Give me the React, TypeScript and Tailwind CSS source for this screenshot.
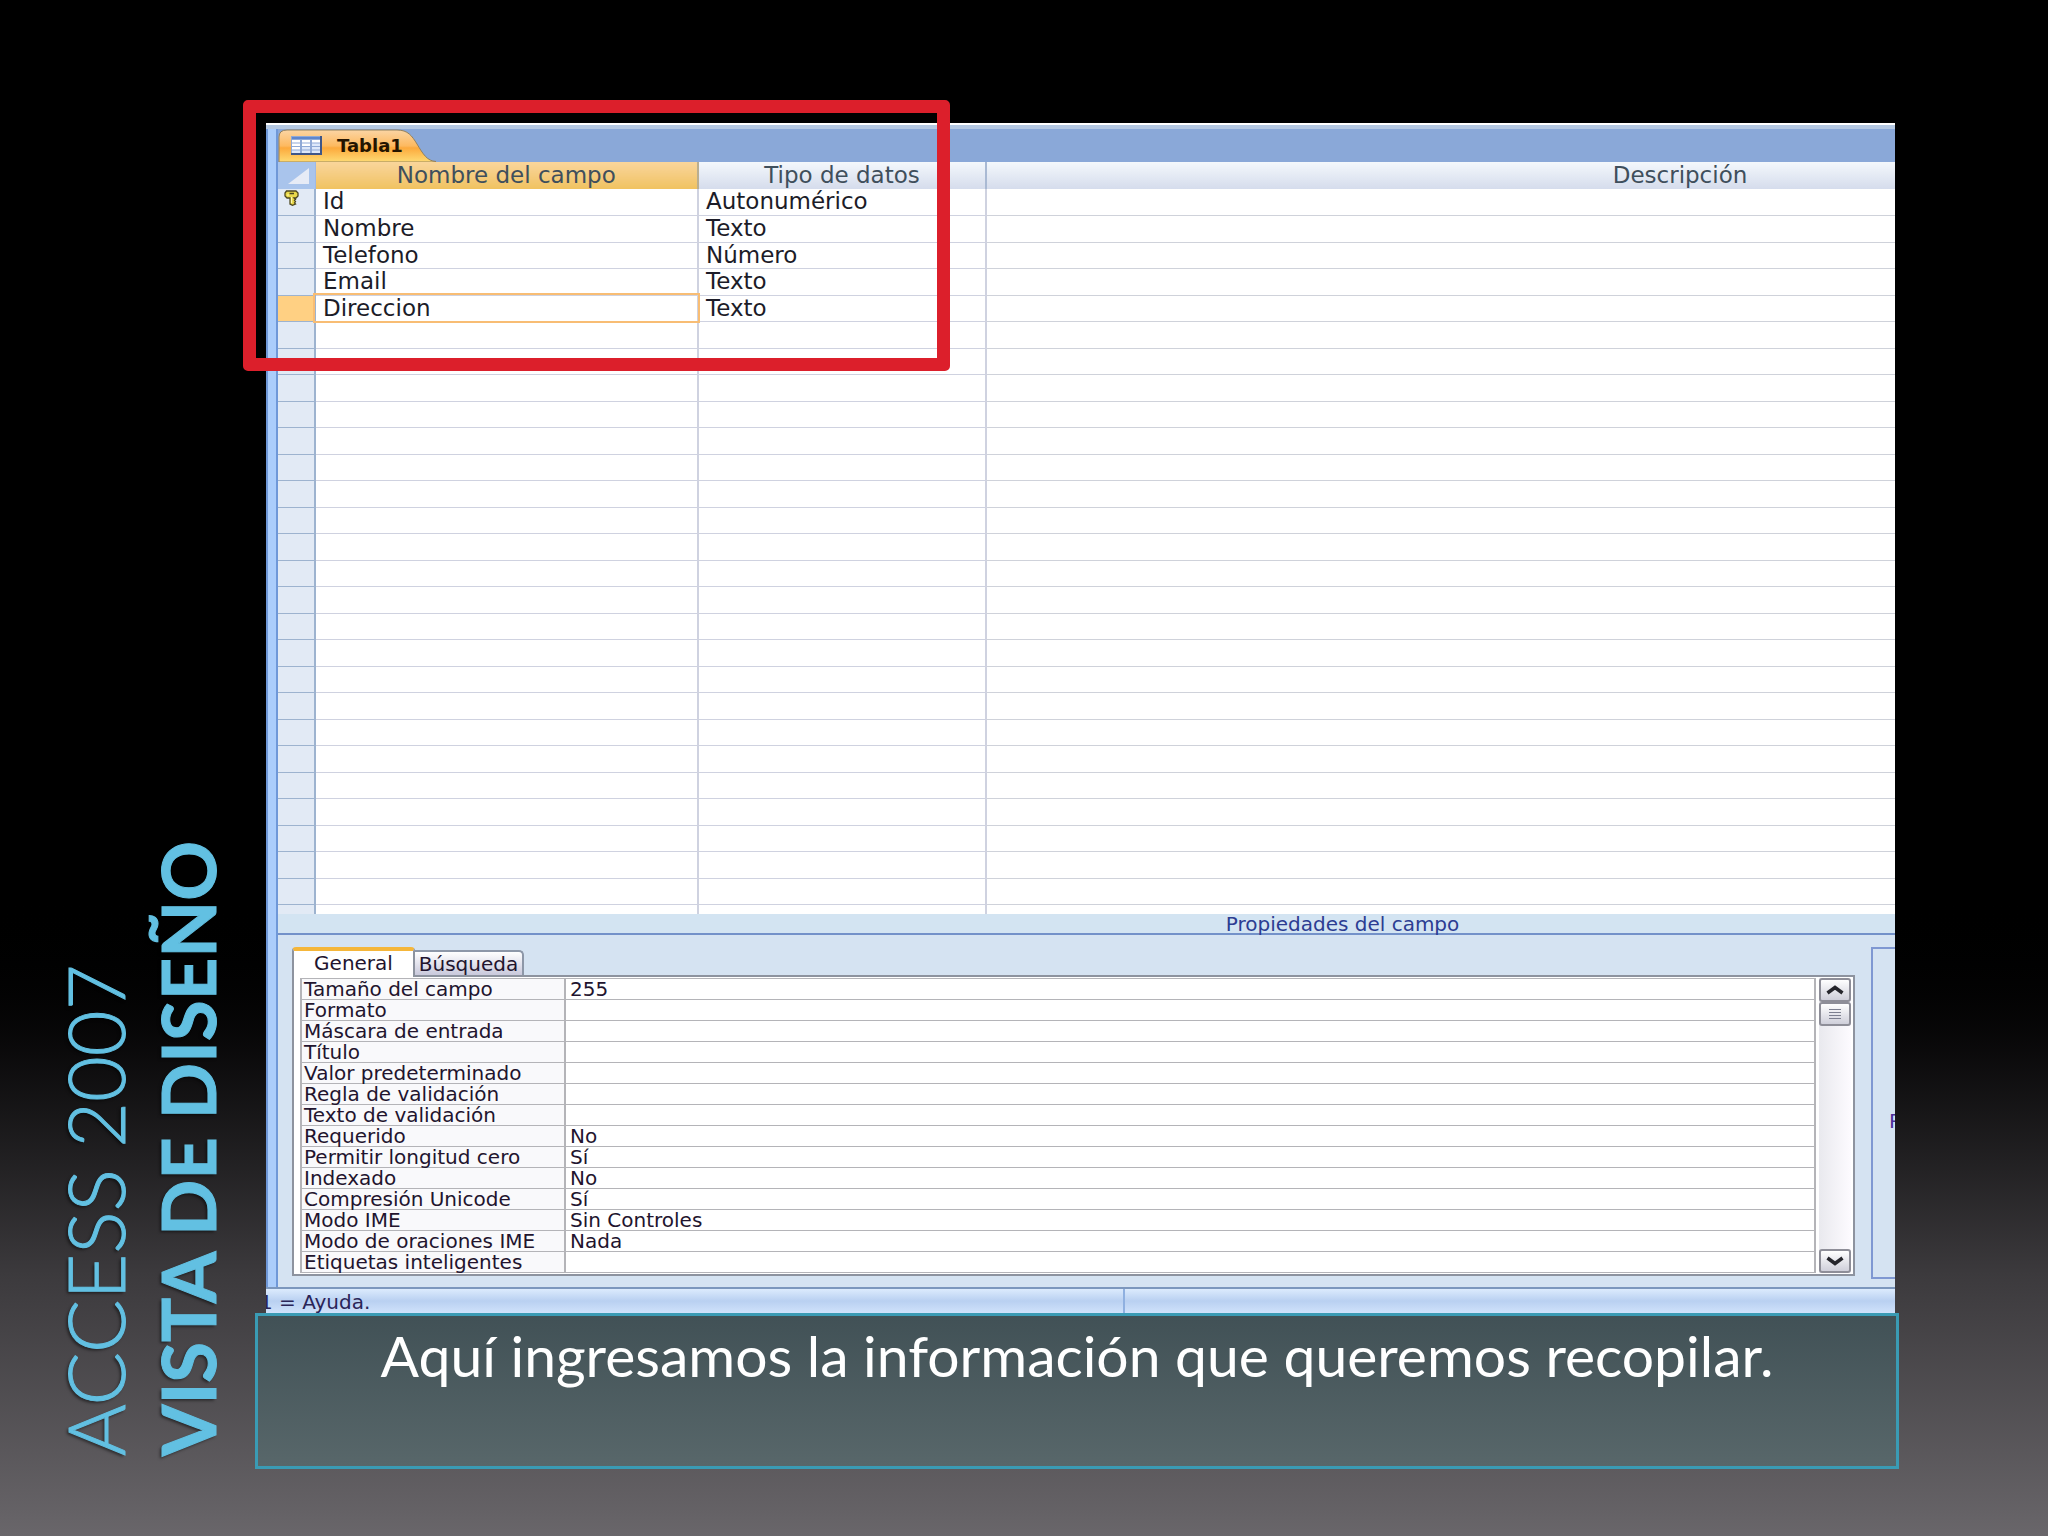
import React from "react";

type Field = { name: string; type: string; isKey?: boolean; current?: boolean };

const fields: Field[] = [
  { name: "Id", type: "Autonumérico", isKey: true },
  { name: "Nombre", type: "Texto" },
  { name: "Telefono", type: "Número" },
  { name: "Email", type: "Texto" },
  { name: "Direccion", type: "Texto", current: true },
];

const rows: Field[] = [
  ...fields,
  ...Array.from({ length: 22 }, () => ({ name: "", type: "" })),
];

const properties: [string, string][] = [
  ["Tamaño del campo", "255"],
  ["Formato", ""],
  ["Máscara de entrada", ""],
  ["Título", ""],
  ["Valor predeterminado", ""],
  ["Regla de validación", ""],
  ["Texto de validación", ""],
  ["Requerido", "No"],
  ["Permitir longitud cero", "Sí"],
  ["Indexado", "No"],
  ["Compresión Unicode", "Sí"],
  ["Modo IME", "Sin Controles"],
  ["Modo de oraciones IME", "Nada"],
  ["Etiquetas inteligentes", ""],
];

function TableIcon() {
  return (
    <svg width="31" height="19" viewBox="0 0 31 19" aria-hidden="true">
      <rect width="31" height="19" fill="#3f5688" />
      <rect width="29" height="17" fill="#8fa9d6" />
      <rect x="1" y="1" width="28" height="2" fill="#5f86cc" />
      {[0, 1, 2].map((c) =>
        [0, 1, 2, 3].map((r) => (
          <rect key={`${c}-${r}`} x={1 + c * 10} y={4 + r * 3.5} width="8" height="2.5" fill={r + c < 3 ? "#ffffff" : "#dde8fa"} />
        ))
      )}
    </svg>
  );
}

function KeyIcon() {
  return (
    <svg width="15" height="16" viewBox="0 0 15 16" aria-hidden="true">
      <path d="M2.500 1h9.500l2 2v3l-2 2h-2l1.500 1.500-1 1 1 1-1 1.500 1 1L8.500 15.300 6 14V8H3L1 6V3z" fill="#e9d84a" stroke="#4d4720" strokeWidth="1.300" />
      <path d="M5.500 3.500h4.500" stroke="#4d4720" strokeWidth="1.500" />
      <path d="M3 5h2M7.500 7v6" stroke="#fff9b0" strokeWidth="1.200" />
    </svg>
  );
}

function FieldGrid() {
  return (
    <table className="w-full table-fixed border-collapse text-[23px] leading-[25px] text-[#1c1c28]">
      <colgroup>
        <col className="w-[37px]" />
        <col className="w-[383px]" />
        <col className="w-[288px]" />
        <col />
      </colgroup>
      <thead>
        <tr className="h-[27px] text-[#3f4f5c]">
          <th className="border-r border-[#9fb9e4] bg-[#a9c4ec] p-0" aria-label="Seleccionar todo">
            <svg className="mr-[6px] ml-auto block" width="21" height="16" viewBox="0 0 21 16" aria-hidden="true">
              <path d="M21 0v16H0z" fill="#e6ebf6" />
            </svg>
          </th>
          <th className="border-r-2 border-[#b9ae90] bg-linear-to-b from-[#f9d59b] to-[#f0c25f] p-0 font-normal">Nombre del campo</th>
          <th className="border-r-2 border-[#a9b9d3] bg-linear-to-b from-[#f4f8fc] to-[#d5dcec] p-0 font-normal">Tipo de datos</th>
          <th className="bg-linear-to-b from-[#f4f8fc] to-[#d5dcec] p-0 pl-[478px] font-normal">Descripción</th>
        </tr>
      </thead>
      <tbody>
        {rows.map((f, i) => (
          <tr key={i} className="odd:h-[26px] even:h-[27px]">
            <td
              className={
                f.current
                  ? "border-r-2 border-b border-[#9db3cf] bg-[#ffd083] p-0"
                  : "border-r-2 border-b border-[#9db3cf] bg-[#e2eaf5] p-0"
              }
            >
              {f.isKey && (
                <div className="-mt-2 pl-[6px]">
                  <KeyIcon />
                </div>
              )}
            </td>
            <td
              className={
                f.current
                  ? "border-r-2 border-b border-[#cfd2e0] bg-white p-0 pl-[7px] outline-2 outline-[#f8bd74]"
                  : "border-r-2 border-b border-[#cfd2e0] bg-white p-0 pl-[7px]"
              }
            >
              {f.name}
            </td>
            <td className="border-r-2 border-b border-[#cfd2e0] bg-white p-0 pl-[7px]">{f.type}</td>
            <td className="border-b border-[#cfd2da] bg-white p-0" />
          </tr>
        ))}
        <tr className="h-[10px]">
          <td className="border-r-2 border-[#9db3cf] bg-[#e2eaf5] p-0" />
          <td className="border-r-2 border-[#cfd2e0] bg-white p-0" />
          <td className="border-r-2 border-[#cfd2e0] bg-white p-0" />
          <td className="bg-white p-0" />
        </tr>
      </tbody>
    </table>
  );
}

const scrollButton =
  "flex h-[24px] w-full items-center justify-center rounded-[3px] border-2 border-[#8e8e98] bg-linear-to-b from-white to-[#cfcfda]";

function ScrollBar() {
  return (
    <div className="flex w-[32px] flex-col bg-linear-to-r from-[#e9e9ee] to-[#fdfbff]">
      <button className={scrollButton} aria-label="Subir">
        <svg width="18" height="10" viewBox="0 0 18 10" aria-hidden="true">
          <path d="M1.500 8 9 2.500 16.500 8" fill="none" stroke="#26262c" strokeWidth="3.500" />
        </svg>
      </button>
      <button className={scrollButton} aria-label="Desplazar">
        <svg width="12" height="12" viewBox="0 0 12 12" aria-hidden="true">
          <path d="M0 1.500h12M0 4.500h12M0 7.500h12M0 10.500h12" stroke="#7d8090" strokeWidth="1" />
        </svg>
      </button>
      <div className="grow" />
      <button className={scrollButton} aria-label="Bajar">
        <svg width="18" height="10" viewBox="0 0 18 10" aria-hidden="true">
          <path d="M1.500 2 9 7.500 16.500 2" fill="none" stroke="#26262c" strokeWidth="3.500" />
        </svg>
      </button>
    </div>
  );
}

function PropertySheet() {
  return (
    <section className="flex bg-[#d5e3f2] pt-3 text-[20px] leading-5 text-[#22142e]">
      <div className="ml-[14px] flex grow flex-col pb-[11px]">
        <div className="flex items-end" role="tablist">
          <button role="tab" aria-selected="true" className="relative -mb-[2px] h-[30px] w-[123px] rounded-t-[4px] border-x-2 border-t-4 border-x-[#8d939f] border-t-[#f5b63a] bg-white pb-[2px]">
            General
          </button>
          <button role="tab" aria-selected="false" className="h-[25px] w-[109px] rounded-tr-[5px] border-t-2 border-r-2 border-[#8d97a8] bg-linear-to-b from-white to-[#c9c9dc] text-center">
            Búsqueda
          </button>
        </div>
        <div className="flex gap-[3px] border-2 border-[#8d939f] bg-white py-px pr-[2px] pl-[6px]">
          <table className="grow table-fixed border-collapse">
            <colgroup>
              <col className="w-[264px]" />
              <col />
            </colgroup>
            <tbody>
              {properties.map(([label, value]) => (
                <tr key={label} className="h-[21px]">
                  <th scope="row" className="border-2 border-y border-[#b4b4b8] bg-[#f9f9fb] p-0 pl-[2px] text-left font-normal whitespace-nowrap">
                    {label}
                  </th>
                  <td className="border-2 border-y border-[#b4b4b8] bg-white p-0 pl-[4px]">{value}</td>
                </tr>
              ))}
            </tbody>
          </table>
          <ScrollBar />
        </div>
      </div>
      <div className="mb-2 ml-[16px] flex w-[24px] items-center justify-end overflow-hidden border-y-2 border-l-2 border-[#7f98d2] pt-4">
        <span className="w-[6px] overflow-hidden text-[#4b2f9a]">P</span>
      </div>
    </section>
  );
}

function AccessWindow() {
  return (
    <div className="relative mr-[4px] ml-[11px] bg-[#d5e3f2]">
      <div className="h-[6px] border-t-2 border-white bg-[#b4c8e2]" />
      <div className="flex">
        <div className="w-[12px] shrink-0 border-x-2 border-[#6f98d8] bg-[#abcdfb]" />
        <div className="min-w-0 grow">
          <div className="h-[33px] bg-[#8aa8d8]">
            <button className="relative flex h-[33px] w-[158px] items-center pl-[13px] text-[18px] font-bold text-[#241400]">
              <svg className="absolute inset-0" width="158" height="33" viewBox="0 0 158 33" aria-hidden="true">
                <defs>
                  <linearGradient id="tab" x1="0" y1="0" x2="0" y2="1">
                    <stop offset="0" stopColor="#fbd5a4" />
                    <stop offset="0.500" stopColor="#fdb95f" />
                    <stop offset="0.560" stopColor="#fca93c" />
                    <stop offset="1" stopColor="#fedb74" />
                  </linearGradient>
                </defs>
                <path d="M1 33V8Q1 1 9 1H119C130 1 134 7 139 15C145 25 149 32 158 32.500V33z" fill="url(#tab)" stroke="#94815c" strokeWidth="1" />
              </svg>
              <span className="relative flex items-center gap-[15px]">
                <TableIcon />
                Tabla1
              </span>
            </button>
          </div>
          <FieldGrid />
          <div className="h-[21px] border-b-2 border-[#7391c9] bg-[#d3e4f2] pl-[512px] text-center text-[20px] leading-5 text-[#2c3d92]">
            Propiedades del campo
          </div>
          <PropertySheet />
        </div>
      </div>
      <footer className="flex h-[26px] overflow-hidden border-t-2 border-[#7c97bd] bg-linear-to-b from-[#dcebfd] via-[#b9d0f1] to-[#d0e2fb] text-[20px] leading-[26px] text-[#2a2558]">
        <div className="w-[859px] border-r-2 border-[#8fb0e0]">
          <span className="-ml-[6px]">1 = Ayuda.</span>
        </div>
      </footer>
      <div className="pointer-events-none absolute -top-[23px] -left-[23px] h-[271px] w-[707px] rounded-[5px] border-[13px] border-[#dc1f2b]" />
    </div>
  );
}

export default function App() {
  return (
    <div className="flex min-h-screen w-full bg-linear-to-b from-black from-58% via-[#3c3a3d] via-83% to-[#69666a] font-['DejaVu_Sans',sans-serif]">
      <aside className="flex w-[255px] shrink-0 items-end pb-[80px] pl-[48px]">
        <h1 className="rotate-180 font-['Lato',sans-serif] text-[79px] leading-[93px] font-light whitespace-nowrap text-[#62c0e2] uppercase [-webkit-text-stroke:1px_#62c0e2] [text-shadow:-2px_-2px_3px_rgba(0,0,0,0.5)] [writing-mode:vertical-rl]">
          Access 2007
          <br />
          <strong className="text-[74px] font-bold">Vista de diseño</strong>
        </h1>
      </aside>
      <main className="min-w-0 grow pt-[123px] pr-[149px]">
        <AccessWindow />
        <p className="h-[156px] border-[3px] border-[#3a9bb4] bg-linear-to-b from-[#415156] to-[#58676a] pt-[6px] text-center font-['Lato',sans-serif] text-[57px] leading-[66px] text-white">
          Aquí ingresamos la información que queremos recopilar.
        </p>
      </main>
    </div>
  );
}
